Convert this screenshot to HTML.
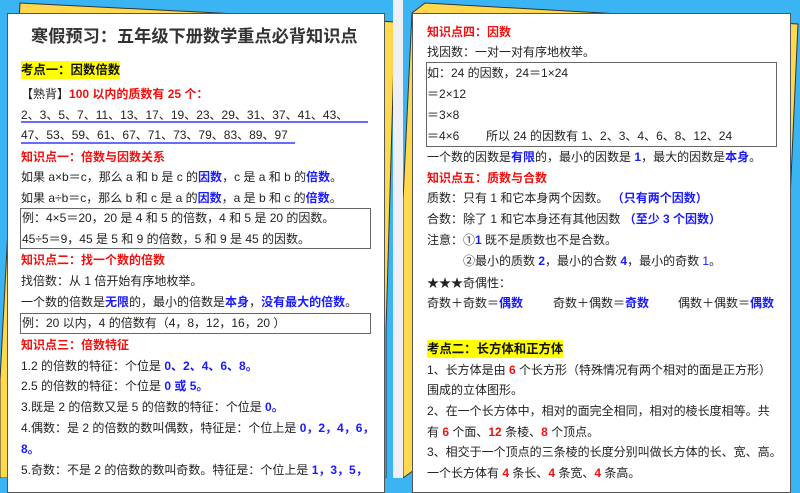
<!DOCTYPE html>
<html><head><meta charset="utf-8"><style>
*{margin:0;padding:0;box-sizing:border-box}
body{width:800px;height:478px;overflow:hidden;position:relative;background:#3bb4f4;font-family:"Liberation Sans","Noto Sans CJK SC",sans-serif;font-size:12px;color:#222}
.card{position:absolute;background:#fff;border:1.5px solid #555}
.l{position:absolute;height:18px;line-height:18px;white-space:nowrap}
.r{color:#f01010;font-weight:bold}
.b{color:#1a1aff;font-weight:bold}
.hl{background:#ffff00;font-weight:bold;color:#111;padding:2px 0;font-size:12.4px}
.box{position:absolute;border:1.5px solid #666}
</style></head><body>
<svg width="800" height="478" style="position:absolute;left:0;top:0">
<polygon points="20,3 395,22 386,330 386,478 0,478 0,380" fill="#ffd84e" stroke="#333" stroke-width="1"/>
<polygon points="425,3 798,24 790,200 403,478 403,200 412,13" fill="#ffd84e" stroke="#333" stroke-width="1"/>
<rect x="393" y="0" width="10" height="478" fill="#eef0f6"/>
</svg>
<div class="card" style="left:7px;top:13px;width:378px;height:480px"></div>
<div class="card" style="left:412px;top:13px;width:379px;height:480px"></div>

<div class="l" style="left:31px;top:27px;font-size:17.2px;font-weight:bold;color:#333">寒假预习：五年级下册数学重点必背知识点</div>
<div class="l" style="left:21px;top:61px"><span class="hl">考点一：因数倍数</span></div>
<div class="l" style="left:21px;top:85px">【熟背】<span class="r">100 以内的质数有 25 个：</span></div>
<div class="l" style="left:21px;top:106px">2、3、5、7、11、13、17、19、23、29、31、37、41、43、</div>
<div style="position:absolute;left:21px;top:121px;width:347px;height:1.5px;background:#6a6aff"></div>
<div class="l" style="left:21px;top:126px">47、53、59、61、67、71、73、79、83、89、97</div>
<div style="position:absolute;left:21px;top:142px;width:274px;height:1.5px;background:#6a6aff"></div>
<div class="l r" style="left:21px;top:148px;font-weight:bold">知识点一：倍数与因数关系</div>
<div class="l" style="left:21px;top:168px">如果 a×b＝c，那么 a 和 b 是 c 的<span class="b">因数</span>，c 是 a 和 b 的<span class="b">倍数</span>。</div>
<div class="l" style="left:21px;top:189px">如果 a÷b＝c，那么 b 和 c 是 a 的<span class="b">因数</span>，a 是 b 和 c 的<span class="b">倍数</span>。</div>
<div class="box" style="left:20px;top:208px;width:351px;height:41px"></div>
<div class="l" style="left:22px;top:209px">例：4×5＝20，20 是 4 和 5 的倍数，4 和 5 是 20 的因数。</div>
<div class="l" style="left:22px;top:230px">45÷5＝9，45 是 5 和 9 的倍数，5 和 9 是 45 的因数。</div>
<div class="l r" style="left:21px;top:251px">知识点二：找一个数的倍数</div>
<div class="l" style="left:21px;top:272px">找倍数：从 1 倍开始有序地枚举。</div>
<div class="l" style="left:21px;top:293px">一个数的倍数是<span class="b">无限</span>的，最小的倍数是<span class="b">本身</span>，<span class="b">没有最大的倍数</span>。</div>
<div class="box" style="left:20px;top:313px;width:351px;height:21px"></div>
<div class="l" style="left:22px;top:314px">例：20 以内，4 的倍数有（4，8，12，16，20 ）</div>
<div class="l r" style="left:21px;top:336px">知识点三：倍数特征</div>
<div class="l" style="left:21px;top:357px">1.2 的倍数的特征：个位是 <span class="b">0、2、4、6、8。</span></div>
<div class="l" style="left:21px;top:377px">2.5 的倍数的特征：个位是 <span class="b">0 或 5。</span></div>
<div class="l" style="left:21px;top:398px">3.既是 2 的倍数又是 5 的倍数的特征：个位是 <span class="b">0。</span></div>
<div class="l" style="left:21px;top:419px">4.偶数：是 2 的倍数的数叫偶数，特征是：个位上是 <span class="b">0，2，4，6，</span></div>
<div class="l" style="left:21px;top:440px"><span class="b">8。</span></div>
<div class="l" style="left:21px;top:461px">5.奇数：不是 2 的倍数的数叫奇数。特征是：个位上是 <span class="b">1，3，5，</span></div>

<div class="l r" style="left:427px;top:23px">知识点四：因数</div>
<div class="l" style="left:427px;top:43px">找因数：一对一对有序地枚举。</div>
<div class="box" style="left:426px;top:62px;width:351px;height:85px"></div>
<div class="l" style="left:427px;top:64px">如：24 的因数，24＝1×24</div>
<div class="l" style="left:427px;top:85px">＝2×12</div>
<div class="l" style="left:427px;top:106px">＝3×8</div>
<div class="l" style="left:427px;top:127px">＝4×6&nbsp;&nbsp;&nbsp;&nbsp;&nbsp;&nbsp;&nbsp;&nbsp;所以 24 的因数有 1、2、3、4、6、8、12、24</div>
<div class="l" style="left:427px;top:148px">一个数的因数是<span class="b">有限</span>的，最小的因数是 <span class="b">1</span>，最大的因数是<span class="b">本身</span>。</div>
<div class="l r" style="left:427px;top:169px">知识点五：质数与合数</div>
<div class="l" style="left:427px;top:189px">质数：只有 1 和它本身两个因数。 <span class="b">（只有两个因数）</span></div>
<div class="l" style="left:427px;top:210px">合数：除了 1 和它本身还有其他因数 <span class="b">（至少 3 个因数）</span></div>
<div class="l" style="left:427px;top:231px">注意：①<span class="b">1</span> 既不是质数也不是合数。</div>
<div class="l" style="left:463px;top:252px">②最小的质数 <span class="b">2</span>，最小的合数 <span class="b">4</span>，最小的奇数 <span style="color:#1a1aff">1</span>。</div>
<div class="l" style="left:427px;top:274px">★★★奇偶性：</div>
<div class="l" style="left:427px;top:294px">奇数＋奇数＝<span class="b">偶数</span></div>
<div class="l" style="left:553px;top:294px">奇数＋偶数＝<span class="b">奇数</span></div>
<div class="l" style="left:678px;top:294px">偶数＋偶数＝<span class="b">偶数</span></div>
<div class="l" style="left:427px;top:340px"><span class="hl">考点二：长方体和正方体</span></div>
<div class="l" style="left:427px;top:361px">1、长方体是由 <span class="r">6</span> 个长方形（特殊情况有两个相对的面是正方形）</div>
<div class="l" style="left:427px;top:381px">围成的立体图形。</div>
<div class="l" style="left:427px;top:402px">2、在一个长方体中，相对的面完全相同，相对的棱长度相等。共</div>
<div class="l" style="left:427px;top:423px">有 <span class="r">6</span> 个面、<span class="r">12</span> 条棱、<span class="r">8</span> 个顶点。</div>
<div class="l" style="left:427px;top:443px">3、相交于一个顶点的三条棱的长度分别叫做长方体的长、宽、高。</div>
<div class="l" style="left:427px;top:464px">一个长方体有 <span class="r">4</span> 条长、<span class="r">4</span> 条宽、<span class="r">4</span> 条高。</div>
</body></html>
